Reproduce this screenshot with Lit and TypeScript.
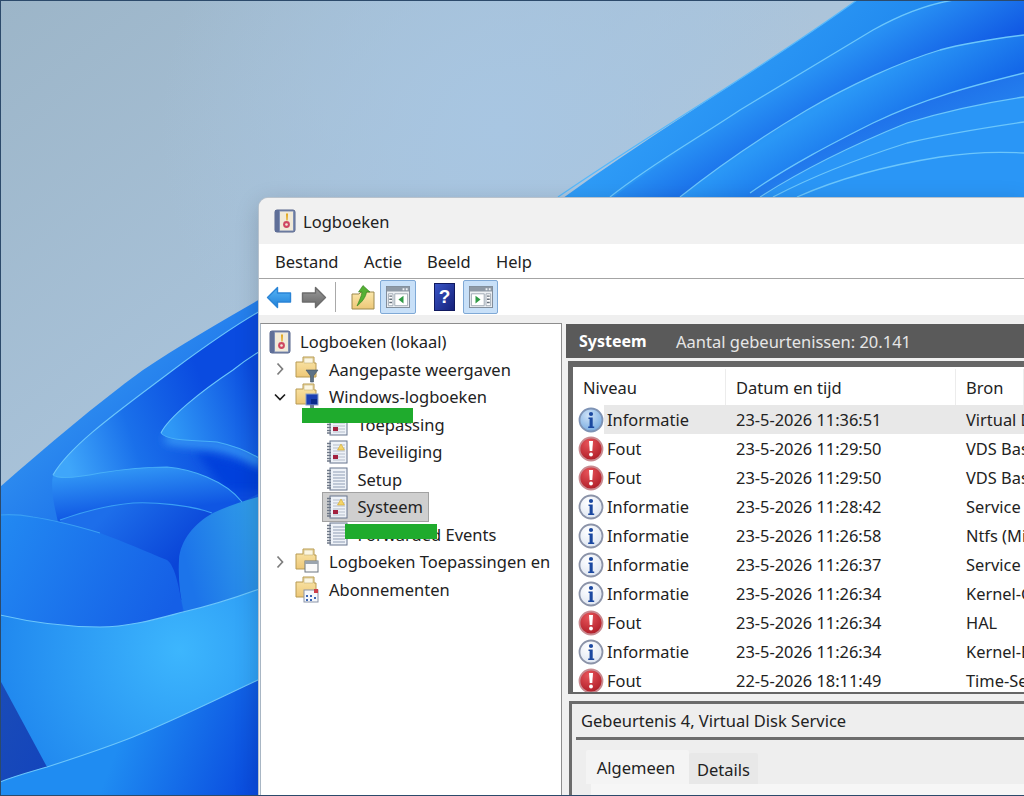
import { LitElement, html, css, svg } from "lit";
import { customElement } from "lit/decorators.js";

const tile = (x: number, y: number, w: number, h: number) => `left:${x}px;top:${y}px;width:${w}px;height:${h}px`;

const logIcon = (kind: "warn" | "plain" | "root") => html`<svg class="ic" width="22" height="24" viewBox="0 0 22 24">
  ${kind === "root"
    ? svg`<rect x="1" y="1" width="20" height="22" rx="2" fill="#7f8fb4" stroke="#56648a"/>
      <rect x="6" y="2.500" width="13" height="19" fill="#f1ead8"/>
      <path d="M12 4.500l2 0-.4 7h-1.200z" fill="#e2a81f"/><circle cx="12.500" cy="15.500" r="3.400" fill="#cf4660"/><circle cx="12.500" cy="15.500" r="1.300" fill="#f1ead8"/>
      <path d="M1 1h4v22H1z" fill="#5f6f98"/>`
    : svg`<rect x="4" y="1" width="17" height="22" fill="#eef2f8" stroke="#67758e"/>
      <path d="M1 3.500h4M1 6.500h4M1 9.500h4M1 12.500h4M1 15.500h4M1 18.500h4M1 21h4" stroke="#6d7786" stroke-width="1.400"/>
      <path d="M7 5h12M7 8h12M7 11h12M7 14h12M7 17h12M7 20h12" stroke="${kind === "plain" ? "#8f9db4" : "#b4bdcb"}"/>`}
  ${kind === "warn"
    ? svg`<path d="M15 4l3.500 6h-7z" fill="#f4d468" stroke="#d0a62e" stroke-width=".6"/><rect x="7" y="15" width="5" height="4" fill="#a3213f"/>`
    : null}
</svg>`;

const folderIcon = (overlay: string) => html`<svg class="ic" width="24" height="27" viewBox="0 0 24 27">
  <path d="M1 6h7V1h11v6h2v14H1z" fill="url(#folder)" stroke="#b79a52"/>
  <path d="M9 2h9v5H9z" fill="#fbf6e2" stroke="#c8b27a" stroke-width=".6"/>
  ${overlay === "filter" ? svg`<path d="M11 14h12l-4.500 6v6h-3v-6z" fill="#5d7286" stroke="#3f5063" stroke-width=".6"/>` : null}
  ${overlay === "pc" ? svg`<rect x="11" y="11" width="12" height="11" fill="#1b3fb4" stroke="#8aa0c4"/><path d="M16 16h6v5h-6z" fill="#0a2a8a"/><path d="M15 22h4v3h-4z" fill="#6f7f92"/>` : null}
  ${overlay === "win" ? svg`<rect x="10" y="13" width="13" height="11" fill="#fafafa" stroke="#6d7680"/><path d="M10 13h13v3H10z" fill="#9aa4ae"/>` : null}
  ${overlay === "cal" ? svg`<rect x="9" y="14" width="14" height="12" fill="#f6f8fb" stroke="#8a94a8"/><path d="M19 13h4v4h-4z" fill="#cc3f4a"/><path d="M11 19h2v2h-2zM15 19h2v2h-2zM11 23h2v2h-2zM15 23h2v2h-2zM19 21h2v2h-2z" fill="#3b66b5"/>` : null}
</svg>`;

const infoIcon = (active: boolean) => html`<svg class="lv" width="26" height="26" viewBox="0 0 26 26">
  <circle cx="13" cy="13" r="11.500" fill="${active ? "url(#infoOn)" : "url(#infoOff)"}" stroke="${active ? "#7e93b5" : "#8b93a8"}" stroke-width="1.800"/>
  <circle cx="13" cy="7" r="2.100" fill="#1b48a0"/><path d="M10.500 10.500h4.200v9h1.500v1.500h-6v-1.500h1.400v-7.500h-1.100z" fill="#1b48a0"/>
</svg>`;

const errorIcon = () => html`<svg class="lv" width="26" height="26" viewBox="0 0 26 26">
  <circle cx="13" cy="13" r="11.500" fill="url(#err)" stroke="#c98a90" stroke-width="1.800"/>
  <path d="M11 5h4l-.7 10h-2.600z" fill="#fff"/><circle cx="13" cy="18.500" r="1.900" fill="#fff"/>
</svg>`;

const panelIcon = (dir: "l" | "r") => html`<svg width="24" height="22" viewBox="0 0 26 24">
  <rect x=".5" y=".5" width="25" height="23" fill="#eef1f4" stroke="#7b8794"/>
  <path d="M1 1h24v5H1z" fill="#8e99a5"/>
  <path d="M18 2.500h2v2h-2zM21.500 2.500h2v2h-2z" fill="#eef1f4"/>
  ${dir === "l"
    ? svg`<path d="M2.500 8.500h5v13h-5zM9.500 8.500h14v13h-14z" fill="#fff" stroke="#9aa5b0"/><path d="M3.500 11h3M3.500 14.500h3M3.500 18h3" stroke="#67717c" stroke-width="1.500"/><path d="M19 10.500v8.500l-5.500-4.300z" fill="#2f9a45"/>`
    : svg`<path d="M2.500 8.500h14v13h-14zM18.500 8.500h5v13h-5z" fill="#fff" stroke="#9aa5b0"/><path d="M19.500 11h3M19.500 14.500h3M19.500 18h3" stroke="#67717c" stroke-width="1.500"/><path d="M7 10.500v8.500l5.500-4.300z" fill="#2f9a45"/>`}
</svg>`;

const chevron = (open: boolean) => html`<svg width="12" height="14" viewBox="0 0 12 14">
  ${open
    ? svg`<path d="M1 4.500l5 5 5-5" fill="none" stroke="#1c1c1c" stroke-width="1.700"/>`
    : svg`<path d="M3.500 1.500l5 5.500-5 5.500" fill="none" stroke="#7d7d7d" stroke-width="1.700"/>`}
</svg>`;

const rows: [string, string, string][] = [
  ["i", "23-5-2026 11:36:51", "Virtual Disk Service"],
  ["e", "23-5-2026 11:29:50", "VDS Basic Provider"],
  ["e", "23-5-2026 11:29:50", "VDS Basic Provider"],
  ["i", "23-5-2026 11:28:42", "Service Control Manager"],
  ["i", "23-5-2026 11:26:58", "Ntfs (Microsoft-Windows)"],
  ["i", "23-5-2026 11:26:37", "Service Control Manager"],
  ["i", "23-5-2026 11:26:34", "Kernel-General"],
  ["e", "23-5-2026 11:26:34", "HAL"],
  ["i", "23-5-2026 11:26:34", "Kernel-Boot"],
  ["e", "22-5-2026 18:11:49", "Time-Service"],
];

@customElement("app-root")
export class AppRoot extends LitElement {
  static styles = css`
    :host { display: block; width: 1024px; height: 796px; position: relative; overflow: hidden; font-family: "Noto Sans", "Open Sans", sans-serif; font-size: 16.5px; color: #222; }
    .wall { position: absolute; inset: 0; display: block; }
    .window { position: absolute; left: 259px; top: 198px; width: 765px; height: 598px; display: flex; flex-direction: column; background: #f0f0f0; border-top-left-radius: 9px; overflow: hidden; box-shadow: 0 0 0 1px #b8c2cc, 0 6px 24px rgba(0,0,0,.18); }
    .title { height: 46px; flex: none; display: flex; align-items: center; gap: 7px; padding-left: 15px; background: #f1f1f1; }
    .menu { height: 35px; flex: none; display: flex; align-items: center; padding: 1px 0 0 16px; background: #fff; border-bottom: 1.500px solid #a4a4a4; box-sizing: border-box; }
    .menu span:nth-child(1) { width: 89px; }
    .menu span:nth-child(2) { width: 63px; }
    .menu span:nth-child(3) { width: 69px; }
    .toolbar { height: 36px; flex: none; display: flex; align-items: center; background: #fff; padding-left: 7px; }
    .tool { width: 26px; height: 23px; flex: none; }
    .toolbar .fwd { margin-left: 9px; }
    .sep { width: 1px; height: 30px; background: #a9a9a9; margin: 0 15px 0 8px; flex: none; }
    .folder-up { width: 24px; height: 25px; flex: none; margin-right: 5px; }
    .toggle { width: 36px; height: 34px; box-sizing: border-box; flex: none; display: flex; align-items: center; justify-content: center; background: #c8e0f8; border: 1px solid #7fa9d6; border-radius: 2px; }
    .toggle.second { width: 35px; }
    .help { width: 21px; height: 28px; flex: none; margin: 0 8px 0 18px; }
    .strip { height: 8px; flex: none; background: #efefef; }
    .panes { flex: 1; min-height: 0; display: flex; gap: 4px; padding-left: 1px; }
    .tree { width: 302px; flex: none; box-sizing: border-box; background: #fff; border: 1.500px solid #8d8d8d; border-left-color: #a8b6c4; border-bottom: none; padding: 4px 0 0 8px; }
    .node { height: 27.500px; display: flex; align-items: center; white-space: nowrap; }
    .node .chev { width: 12px; margin: 0 9px 0 5px; display: flex; flex: none; }
    .node .ic { flex: none; }
    .root .ic { margin-right: 9px; }
    .l1 .ic { margin-right: 10px; }
    .l2 { padding-left: 57px; position: relative; }
    .l2 .ic { margin-right: 9.500px; }
    .sel::before { content: ""; position: absolute; left: 53px; top: -1px; width: 105px; height: 28px; background: #cfcfcf; border: 1px solid #a2a2a2; }
    .sel > * { position: relative; }
    .right { flex: 1; min-width: 0; display: flex; flex-direction: column; }
    .head { height: 34px; flex: none; display: flex; align-items: center; background: #5a5a5a; color: #e6e6e6; padding-left: 13px; margin-top: 1px; white-space: nowrap; }
    .head b { color: #fff; font-weight: 700; font-size: 16px; width: 97px; flex: none; }
    .listwrap { flex: none; margin: 3px 0 0 2px; height: 333px; box-sizing: border-box; border: solid #666; border-width: 6px 0 2px 5px; padding-top: 2px; background: #fff; overflow: hidden; }
    .cols { display: grid; grid-template-columns: 153px 230px 1fr; height: 36px; align-items: center; }
    .cols span { height: 100%; display: flex; align-items: center; padding-left: 10px; border-right: 1px solid #ececec; box-sizing: border-box; }
    .row { display: grid; grid-template-columns: 153px 230px 1fr; height: 29px; align-items: center; white-space: nowrap; font-size: 16.4px; }
    .row.on { background: linear-gradient(90deg, transparent 31px, #e8e8e8 31px); }
    .row > span { padding-left: 10px; overflow: hidden; }
    .c1 { display: flex; align-items: center; padding-left: 5px !important; gap: 3px; }
    .lv { flex: none; }
    .detail { flex: 1; min-height: 0; margin: 7px 0 0 3px; background: #eeeeee; border: solid #6b6b6b; border-width: 3px 0 0 3px; padding: 0 0 0 4px; display: flex; flex-direction: column; }
    .dhead { height: 33px; flex: none; display: flex; align-items: center; padding-left: 5px; border-bottom: 3px solid #6c6c6c; }
    .tabs { display: flex; align-items: flex-end; padding: 11px 0 0 10px; height: 33px; flex: none; }
    .tab { height: 34px; width: 103px; display: flex; align-items: center; justify-content: center; background: #f4f4f4; border-radius: 2px 2px 0 0; padding-right: 3px; box-sizing: border-box; }
    .tab.off { height: 31px; width: 69px; background: #e8e8e8; padding: 2px 0 0; }
    .body { margin-left: 15px; flex: 1; background: #f6f6f6; }
    .mask { position: absolute; background: #1fab2d; }
    .frame { position: absolute; inset: 0; border: solid #2c4a6b; border-width: 1px 0 1px 1px; pointer-events: none; box-sizing: border-box; }
  `;

  wallpaper() {
    return html`<svg class="wall" width="1024" height="796" viewBox="0 0 1024 796">
      <defs>
        <filter id="soft" x="-20%" y="-50%" width="140%" height="200%"><feGaussianBlur stdDeviation="5"/></filter>
        <linearGradient id="sky" x1="0" y1="0" x2="1" y2="1"><stop offset="0" stop-color="#9cb5c8"/><stop offset=".35" stop-color="#a9c3da"/><stop offset=".6" stop-color="#b5c8da"/><stop offset="1" stop-color="#c4ced8"/></linearGradient>
        <radialGradient id="skyGlow" cx="500" cy="130" r="340" gradientUnits="userSpaceOnUse"><stop offset="0" stop-color="#a8c6e2"/><stop offset="1" stop-color="#a8c6e2" stop-opacity="0"/></radialGradient>
        <linearGradient id="t1" gradientUnits="userSpaceOnUse" x1="620" y1="60" x2="760" y2="200"><stop offset="0" stop-color="#35a4fa"/><stop offset="1" stop-color="#1f87ee"/></linearGradient>
        <linearGradient id="t2" gradientUnits="userSpaceOnUse" x1="840" y1="30" x2="900" y2="130"><stop offset="0" stop-color="#2e9ff8"/><stop offset="1" stop-color="#0a49df"/></linearGradient>
        <linearGradient id="t3" gradientUnits="userSpaceOnUse" x1="850" y1="90" x2="900" y2="170"><stop offset="0" stop-color="#2a97f6"/><stop offset="1" stop-color="#0d5ae4"/></linearGradient>
        <linearGradient id="t4" gradientUnits="userSpaceOnUse" x1="900" y1="110" x2="930" y2="190"><stop offset="0" stop-color="#1f72ea"/><stop offset="1" stop-color="#2b95f5"/></linearGradient>
        <linearGradient id="l0" gradientUnits="userSpaceOnUse" x1="60" y1="400" x2="170" y2="520"><stop offset="0" stop-color="#2f8ff0"/><stop offset="1" stop-color="#1466e8"/></linearGradient>
        <linearGradient id="lA" gradientUnits="userSpaceOnUse" x1="70" y1="470" x2="215" y2="420"><stop offset="0" stop-color="#3fa6fa"/><stop offset=".45" stop-color="#1a70ea"/><stop offset="1" stop-color="#0a4be0"/></linearGradient>
        <linearGradient id="lB" gradientUnits="userSpaceOnUse" x1="170" y1="425" x2="262" y2="395"><stop offset="0" stop-color="#2f98f6"/><stop offset="1" stop-color="#0a4adf"/></linearGradient>
        <linearGradient id="lA2" gradientUnits="userSpaceOnUse" x1="160" y1="467" x2="165" y2="510"><stop offset="0" stop-color="#2f92f4"/><stop offset="1" stop-color="#0f56e3"/></linearGradient>
        <linearGradient id="lC" gradientUnits="userSpaceOnUse" x1="120" y1="500" x2="180" y2="560"><stop offset="0" stop-color="#1d6eea"/><stop offset="1" stop-color="#0a45d8"/></linearGradient>
        <linearGradient id="lD" gradientUnits="userSpaceOnUse" x1="0" y1="520" x2="170" y2="610"><stop offset="0" stop-color="#2289f2"/><stop offset="1" stop-color="#155fe6"/></linearGradient>
        <linearGradient id="lE" gradientUnits="userSpaceOnUse" x1="185" y1="560" x2="259" y2="540"><stop offset="0" stop-color="#1c74ea"/><stop offset="1" stop-color="#2f9ae8"/></linearGradient>
        <radialGradient id="lF" gradientUnits="userSpaceOnUse" cx="180" cy="650" r="190"><stop offset="0" stop-color="#3db6fd"/><stop offset="1" stop-color="#1f86ee"/></radialGradient>
        <linearGradient id="lG" gradientUnits="userSpaceOnUse" x1="120" y1="740" x2="250" y2="790"><stop offset="0" stop-color="#1f8cf2"/><stop offset="1" stop-color="#0a4cdf"/></linearGradient>
        <linearGradient id="lT" x1="0" y1="0" x2="1" y2="1"><stop offset="0" stop-color="#1a4cb8"/><stop offset="1" stop-color="#1344bc"/></linearGradient>
        <linearGradient id="folder" x1="0" y1="0" x2="0" y2="1"><stop offset="0" stop-color="#fbe8ac"/><stop offset="1" stop-color="#edc777"/></linearGradient>
        <linearGradient id="back" x1="0" y1="0" x2="0" y2="1"><stop offset="0" stop-color="#58b6f6"/><stop offset="1" stop-color="#1f7fd8"/></linearGradient>
        <linearGradient id="fwd" x1="0" y1="0" x2="0" y2="1"><stop offset="0" stop-color="#9b9b9b"/><stop offset="1" stop-color="#666"/></linearGradient>
        <linearGradient id="helpG" x1="0" y1="0" x2="1" y2="1"><stop offset="0" stop-color="#3a56c8"/><stop offset="1" stop-color="#141f78"/></linearGradient>
        <radialGradient id="infoOn" cx=".4" cy=".3" r=".8"><stop offset="0" stop-color="#cfe3f8"/><stop offset="1" stop-color="#6ea5de"/></radialGradient>
        <radialGradient id="infoOff" cx=".4" cy=".3" r=".8"><stop offset="0" stop-color="#ffffff"/><stop offset="1" stop-color="#dbe3f0"/></radialGradient>
        <radialGradient id="err" cx=".4" cy=".25" r=".85"><stop offset="0" stop-color="#e8545a"/><stop offset="1" stop-color="#a81722"/></radialGradient>
      </defs>
      <rect width="1024" height="796" fill="url(#sky)"/>
      <rect width="1024" height="400" fill="url(#skyGlow)"/>

      <path d="M540 215C640 140 760 70 857 0H1024V240H540Z" fill="url(#t1)"/>
      <path d="M590 215C640 175 690 145 740 110C790 80 840 50 873 30C905 12 930 4 953 0H1024V240H590Z" fill="url(#t2)"/>
      <path d="M660 215C710 170 760 140 807 110C850 85 900 62 940 50C970 42 1000 38 1024 35V240H660Z" fill="url(#t3)"/>
      <path d="M735 205C780 170 830 145 873 123C925 98 975 85 1024 73V240H735Z" fill="url(#t4)"/>
      <path d="M750 205C800 170 860 142 907 123C950 110 990 102 1024 97V240H750Z" fill="#2a96f6"/>
      <g fill="none" stroke="#6cc6fb" stroke-width="1.300">
        <path d="M558 197C640 140 760 70 857 0" stroke="#55b8fb"/>
        <path d="M610 197C650 165 695 140 740 110C790 80 840 50 873 30C905 12 930 4 953 0"/>
        <path d="M680 197C720 165 765 135 807 110C850 85 900 62 940 50C970 42 1000 38 1024 35"/>
        <path d="M750 193C790 165 835 142 873 123C925 98 975 85 1024 73"/>
        <path d="M760 197C810 165 860 142 907 123C950 110 990 102 1024 97"/>
        <path d="M773 197C815 175 860 158 907 143C950 133 990 127 1024 122"/>
        <path d="M797 197C840 178 890 165 940 157C965 153 990 151 1024 153"/>
      </g>

      <path d="M0 487C48 445 95 405 143 370C180 345 220 322 262 298V800H0Z" fill="url(#l0)"/>
      <path d="M53 475C70 445 120 410 173 370C200 350 230 328 262 310V510H150L53 475Z" fill="url(#lA)"/>
      <path d="M262 470C240 462 215 455 195 450L225 490L262 490Z" fill="#0640dc" filter="url(#soft)"/>
      <path d="M165 438C185 444 205 443 217 445C235 449 250 455 262 463" fill="none" stroke="#3a9ef8" stroke-width="9" filter="url(#soft)"/>
      <path d="M161 433C168 418 200 392 233 370C243 362 252 356 262 350V460C250 452 235 446 217 442C190 440 168 441 161 433Z" fill="url(#lB)"/>
      <path d="M53 475C60 480 80 477 100 473C125 469 145 467 167 467C190 469 225 480 242 502L262 492V530H60C55 510 50 490 53 475Z" fill="url(#lA2)"/>
      <path d="M60 520C85 511 110 505 133 503C155 502 190 505 212 513L240 600H100L60 520Z" fill="url(#lC)"/>
      <path d="M0 515C12 514 22 515 33 517C60 521 80 527 100 533C125 542 145 551 167 560C175 565 180 590 183 612V640H0Z" fill="url(#lD)"/>
      <path d="M262 496C245 500 228 506 213 513C195 523 180 540 179 560C178 578 180 596 184 612L262 600Z" fill="url(#lE)"/>
      <path d="M0 615C30 622 65 627 100 627C130 627 160 618 183 612C210 606 235 598 262 588V800H0Z" fill="url(#lF)"/>
      <path d="M0 680L47 767L0 782Z" fill="url(#lT)"/>
      <path d="M0 782C15 776 30 772 47 767C75 758 105 748 133 737C175 720 220 698 262 678V800H0Z" fill="url(#lG)"/>
      <g fill="none" stroke="#6cc6fb" stroke-width="1.100">
        <path d="M53 475C70 445 120 410 173 370C200 350 230 328 262 310"/>
        <path d="M53 475C60 480 80 477 100 473C125 469 145 467 167 467C190 469 225 480 242 502" stroke="#49b0f8"/>
        <path d="M161 433C168 418 200 392 233 370C243 362 252 356 262 350"/>
        <path d="M161 433C168 441 190 440 217 442C235 446 250 452 262 460" stroke="#49b0f8"/>
        <path d="M60 520C85 511 110 505 133 503C155 502 190 505 212 513" stroke="#3a9ff4"/>
        <path d="M0 515C12 514 22 515 33 517C60 521 80 527 100 533" stroke="#3a9ff4"/>
        <path d="M0 615C30 622 65 627 100 627C130 627 160 618 183 612C210 606 235 598 262 588"/>
        <path d="M0 782C15 776 30 772 47 767C75 758 105 748 133 737C175 720 220 698 262 678"/>
      </g>
    </svg>`;
  }

  node(cls: string, content: unknown) {
    return html`<div class="node ${cls}">${content}</div>`;
  }

  render() {
    return html`
      ${this.wallpaper()}
      <div class="window">
        <div class="title"><span style="display:flex">${logIcon("root")}</span><span>Logboeken</span></div>
        <div class="menu"><span>Bestand</span><span>Actie</span><span>Beeld</span><span>Help</span></div>
        <div class="toolbar">
          <svg class="tool" viewBox="0 0 26 23"><path d="M1.500 11.500L11.500 1.500V7H24.500V16H11.500V21.500Z" fill="url(#back)" stroke="#2a84d6" stroke-linejoin="round" stroke-width="1.400"/></svg>
          <svg class="tool fwd" viewBox="0 0 26 23"><path d="M24.500 11.500L14.500 1.500V7H1.500V16H14.500V21.500Z" fill="url(#fwd)" stroke="#6c6c6c" stroke-linejoin="round" stroke-width="1.400"/></svg>
          <span class="sep"></span>
          <svg class="folder-up" viewBox="0 0 24 25"><path d="M1 9h7l2-2h13v17H1z" fill="url(#folder)" stroke="#9d8a4e"/><path d="M12 .5L19 7h-3.500C15 12 11 17 6 21c2-5 4.500-9.500 5-14H7.500z" fill="#55b033" stroke="#2f7e1c" stroke-width=".6"/></svg>
          <span class="toggle">${panelIcon("l")}</span>
          <svg class="help" viewBox="0 0 21 28"><rect x=".5" y=".5" width="20" height="27" fill="url(#helpG)" stroke="#10195f"/><text x="10.500" y="20" font-family="Liberation Sans, sans-serif" font-size="19" font-weight="700" fill="#fff" text-anchor="middle">?</text></svg>
          <span class="toggle second">${panelIcon("r")}</span>
        </div>
        <div class="strip"></div>
        <div class="panes">
          <div class="tree">
            ${this.node("root", html`${logIcon("root")}<span>Logboeken (lokaal)</span>`)}
            ${this.node("l1", html`<span class="chev">${chevron(false)}</span>${folderIcon("filter")}<span>Aangepaste weergaven</span>`)}
            ${this.node("l1", html`<span class="chev">${chevron(true)}</span>${folderIcon("pc")}<span>Windows-logboeken</span>`)}
            ${this.node("l2", html`${logIcon("warn")}<span>Toepassing</span>`)}
            ${this.node("l2", html`${logIcon("warn")}<span>Beveiliging</span>`)}
            ${this.node("l2", html`${logIcon("plain")}<span>Setup</span>`)}
            ${this.node("l2 sel", html`${logIcon("warn")}<span>Systeem</span>`)}
            ${this.node("l2", html`${logIcon("plain")}<span>Forwarded Events</span>`)}
            ${this.node("l1", html`<span class="chev">${chevron(false)}</span>${folderIcon("win")}<span>Logboeken Toepassingen en</span>`)}
            ${this.node("l1", html`<span class="chev"></span>${folderIcon("cal")}<span>Abonnementen</span>`)}
          </div>
          <div class="right">
            <div class="head"><b>Systeem</b><span>Aantal gebeurtenissen: 20.141</span></div>
            <div class="listwrap">
              <div class="cols"><span>Niveau</span><span>Datum en tijd</span><span>Bron</span></div>
              ${rows.map(([k, d, s], i) => html`<div class="row ${i === 0 ? "on" : ""}">
                <span class="c1">${k === "i" ? infoIcon(i === 0) : errorIcon()}<span class="txt">${k === "i" ? "Informatie" : "Fout"}</span></span>
                <span>${d}</span><span>${s}</span>
              </div>`)}
            </div>
            <div class="detail">
              <div class="dhead">Gebeurtenis 4, Virtual Disk Service</div>
              <div class="tabs"><span class="tab">Algemeen</span><span class="tab off">Details</span></div>
              <div class="body"></div>
            </div>
          </div>
        </div>
      </div>
      <div class="mask" style="${tile(302, 408, 111, 15)}"></div>
      <div class="mask" style="${tile(345, 524, 92, 15)}"></div>
      <div class="frame"></div>
    `;
  }
}
